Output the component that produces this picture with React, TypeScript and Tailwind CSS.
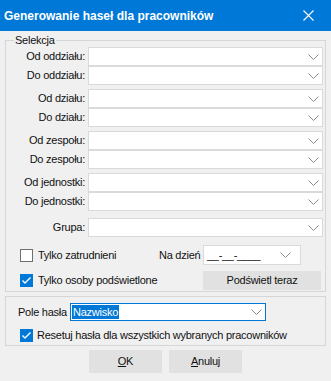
import React from "react";

function Chevron() {
  return (
    <svg width="11" height="6" viewBox="0 0 11 6" className="shrink-0">
      <path d="M0.5 0.5 L5.5 5.5 L10.5 0.5" fill="none" stroke="#8c8c8c" strokeWidth="1" />
    </svg>
  );
}

function Combo() {
  return (
    <div className="flex h-[19px] items-center justify-end border border-[#dadada] bg-white pr-[3px]">
      <Chevron />
    </div>
  );
}

function CheckBox({ checked }: { checked?: boolean }) {
  if (checked) {
    return (
      <span className="flex h-[13px] w-[13px] shrink-0 items-center justify-center bg-[#0078d7]">
        <svg width="11" height="11" viewBox="0 0 11 11">
          <path d="M1.5 5.5 L4 8 L9.5 2.5" fill="none" stroke="#fff" strokeWidth="1.4" />
        </svg>
      </span>
    );
  }
  return <span className="h-[13px] w-[13px] shrink-0 border border-[#6f6f6f] bg-white" />;
}

const pairs = [
  ["Od oddziału:", "Do oddziału:"],
  ["Od działu:", "Do działu:"],
  ["Od zespołu:", "Do zespołu:"],
  ["Od jednostki:", "Do jednostki:"],
];

function Row({ label }: { label: string }) {
  return (
    <div className="grid grid-cols-[79px_1fr] items-center gap-x-[3px]">
      <span className="text-right leading-[19px]">{label}</span>
      <Combo />
    </div>
  );
}

export default function App() {
  return (
    <div className="flex h-[381px] w-[331px] flex-col bg-[#f0f0f0] font-['Liberation_Sans',Arial,sans-serif] text-[11px] tracking-[-0.25px] text-[#111]">
      <div className="flex h-[31px] shrink-0 items-center justify-between bg-[#0078d7] pl-[4px] pr-[17px] text-white">
        <span className="text-[12px] font-bold tracking-[0px]">Generowanie haseł dla pracowników</span>
        <svg width="11" height="11" viewBox="0 0 11 11">
          <path d="M0.5 0.5 L10.5 10.5 M10.5 0.5 L0.5 10.5" stroke="#fff" strokeWidth="1.1" />
        </svg>
      </div>

      <fieldset className="mx-[5px] mt-[2px] border border-[#d6d6d6] pb-[1px] pr-[2px]">
        <legend className="ml-[8px] px-[1px] leading-[14px]">Selekcja</legend>
        <div className="flex flex-col gap-[4px]">
          {pairs.map((p) => (
            <div key={p[0]} className="flex flex-col">
              <Row label={p[0]} />
              <Row label={p[1]} />
            </div>
          ))}
        </div>
        <div className="mt-[7px]">
          <Row label="Grupa:" />
        </div>

        <div className="mt-[8px] flex h-[20px] items-center">
          <div className="flex w-[153px] items-center gap-[5px] pl-[14px]">
            <CheckBox />
            <span>Tylko zatrudnieni</span>
          </div>
          <span className="w-[44px]">Na dzień</span>
          <div className="flex h-[20px] w-[98px] items-center justify-between border border-[#dadada] bg-white pl-[3px] pr-[9px]">
            <span className="tracking-[-0.3px]">__-__-____</span>
            <Chevron />
          </div>
        </div>

        <div className="mt-[6px] flex h-[19px] items-center">
          <div className="flex w-[197px] items-center gap-[5px] pl-[14px]">
            <CheckBox checked />
            <span>Tylko osoby podświetlone</span>
          </div>
          <button className="h-[19px] w-[118px] bg-[#e1e1e1] text-center">Podświetl teraz</button>
        </div>
      </fieldset>

      <div className="mx-[5px] mt-[4px] flex h-[50px] flex-col border border-[#d6d6d6] pt-[6px]">
        <div className="flex items-center">
          <span className="w-[64px] pl-[12px]">Pole hasła</span>
          <div className="flex h-[18px] w-[196px] items-center justify-between border border-[#0078d7] bg-white pl-[1px] pr-[3px]">
            <span className="bg-[#0078d7] px-[1px] leading-[14px] text-white">Nazwisko</span>
            <Chevron />
          </div>
        </div>
        <div className="mt-[6px] flex items-center gap-[4px] pl-[14px]">
          <CheckBox checked />
          <span>Resetuj hasła dla wszystkich wybranych pracowników</span>
        </div>
      </div>

      <div className="mt-[4px] flex justify-center gap-[7px]">
        <button className="h-[23px] w-[73px] bg-[#e1e1e1]">
          <span className="underline">O</span>K
        </button>
        <button className="h-[23px] w-[73px] bg-[#e1e1e1]">
          <span className="underline">A</span>nuluj
        </button>
      </div>
    </div>
  );
}
